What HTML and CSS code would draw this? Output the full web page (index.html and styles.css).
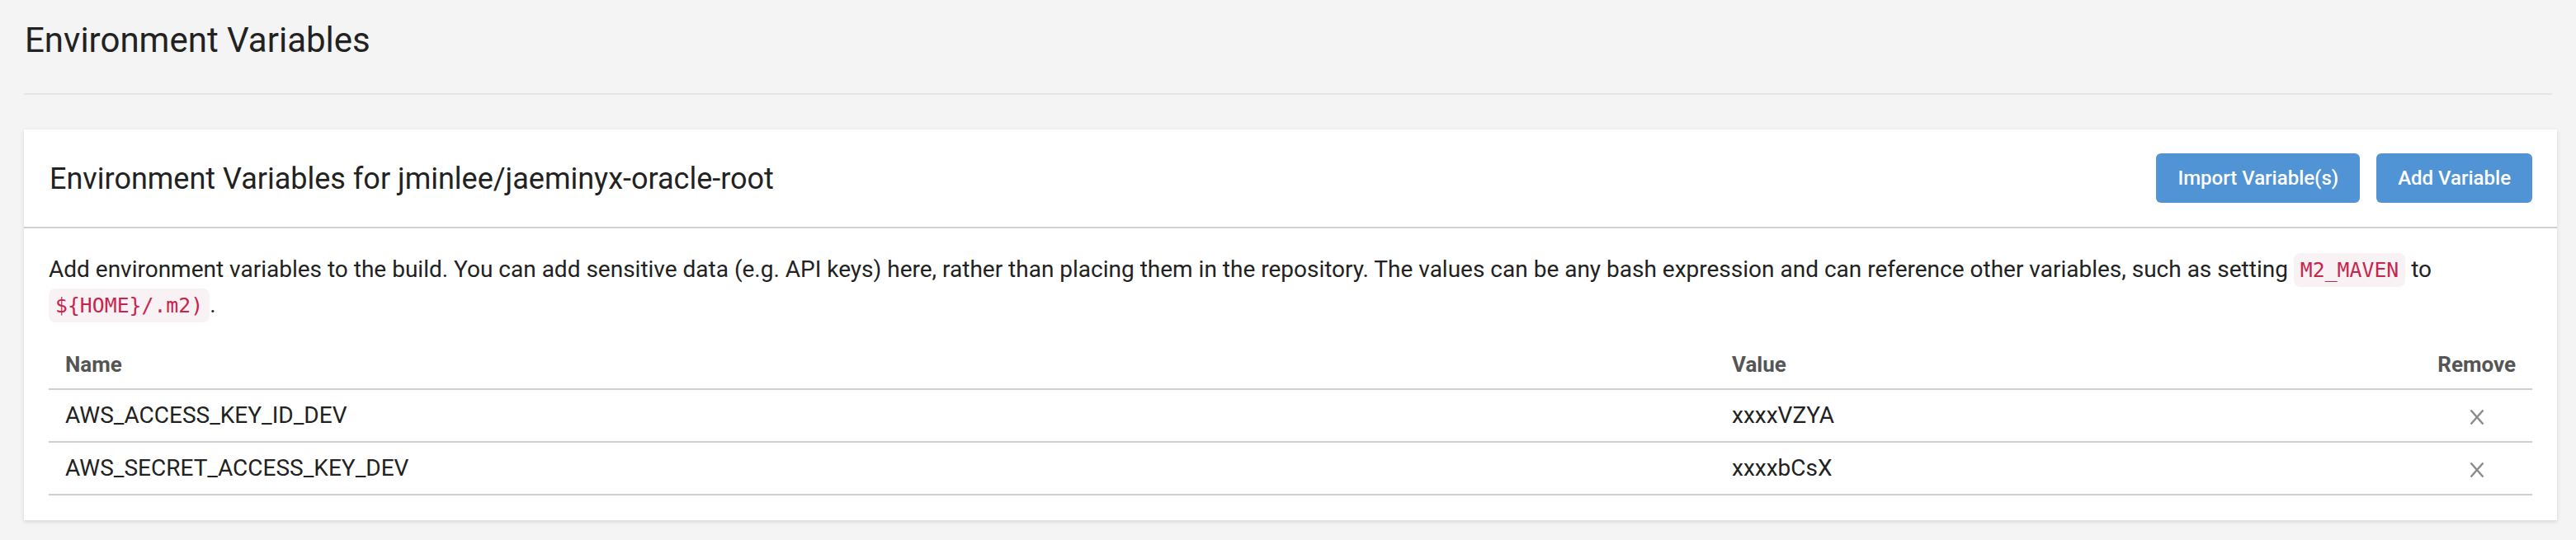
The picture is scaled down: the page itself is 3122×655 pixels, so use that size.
FILE: index.html
```html
<!DOCTYPE html>
<html lang="en">
<head>
<meta charset="utf-8">
<title>Environment Variables</title>
<link rel="stylesheet" href="styles.css">
</head>
<body>
<div class="page">
  <header class="page-header">
    <h1 class="page-title">Environment Variables</h1>
  </header>
  <section class="card">
    <div class="card-header">
      <h2 class="card-title">Environment Variables for jminlee/jaeminyx-oracle-root</h2>
      <div class="actions">
        <button class="btn">Import Variable(s)</button>
        <button class="btn">Add Variable</button>
      </div>
    </div>
    <div class="card-body">
      <p class="intro">Add environment variables to the build. You can add sensitive data (e.g. API keys) here, rather than placing them in the repository. The values can be any bash expression and can reference other variables, such as setting <code class="code">M2_MAVEN</code> to <code class="code">${HOME}/.m2)</code>.</p>
      <table class="vars">
        <thead>
          <tr>
            <th class="col-name">Name</th>
            <th class="col-value">Value</th>
            <th class="col-remove">Remove</th>
          </tr>
        </thead>
        <tbody>
          <tr>
            <td>AWS_ACCESS_KEY_ID_DEV</td>
            <td>xxxxVZYA</td>
            <td class="cell-remove"><svg class="x-icon" viewBox="0 0 18 20" width="18" height="20"><path d="M1.5 1.5 L16.5 18.5 M16.5 1.5 L1.5 18.5"/></svg></td>
          </tr>
          <tr>
            <td>AWS_SECRET_ACCESS_KEY_DEV</td>
            <td>xxxxbCsX</td>
            <td class="cell-remove"><svg class="x-icon" viewBox="0 0 18 20" width="18" height="20"><path d="M1.5 1.5 L16.5 18.5 M16.5 1.5 L1.5 18.5"/></svg></td>
          </tr>
        </tbody>
      </table>
    </div>
  </section>
</div>
</body>
</html>
```

FILE: styles.css
```css
html, body {
  margin: 0;
  padding: 0;
  background: #f4f4f4;
}
body {
  font-family: Roboto, "Liberation Sans", sans-serif;
  color: #222;
}
.page {
  padding: 0 23px 24px 29px;
}
.page-header {
  padding: 24px 0 40px 1px;
  border-bottom: 2px solid #e5e5e5;
  margin-right: 6px;
}
.page-title {
  margin: 0;
  font-size: 42px;
  font-weight: 400;
  line-height: 49px;
  color: #222;
}
.card {
  margin-top: 42px;
  background: #fff;
  box-shadow: 0 2px 5px rgba(0, 0, 0, 0.12);
}
.card-header {
  height: 120px;
  box-sizing: border-box;
  padding: 0 30px 0 31px;
  display: flex;
  align-items: center;
  justify-content: space-between;
  border-bottom: 2px solid #d0d0d0;
}
.card-title {
  margin: 0;
  font-size: 36px;
  font-weight: 400;
  color: #222;
  padding-top: 2px;
}
.actions {
  display: flex;
  gap: 20px;
}
.btn {
  height: 60px;
  padding: 0 26px;
  border: 0;
  border-radius: 6px;
  background: #5094d5;
  color: #fff;
  font-family: Roboto, "Liberation Sans", sans-serif;
  font-size: 24px;
  font-weight: 500;
}
.card-body {
  padding: 29px 30px 30px 30px;
}
.intro {
  margin: 0;
  font-size: 28px;
  line-height: 42px;
  color: #222;
}
.code {
  font-family: "DejaVu Sans Mono", "Liberation Mono", monospace;
  font-size: 24.8px;
  color: #c7254e;
  background: #f9f2f4;
  border-radius: 8px;
  padding: 6px 8px;
}
.vars {
  width: 100%;
  margin-top: 19px;
  border-collapse: collapse;
  font-size: 28px;
}
.vars th {
  text-align: left;
  font-size: 26px;
  font-weight: 700;
  color: #555;
  padding: 16px 20px 14px;
  line-height: 30px;
  border-bottom: 2px solid #cfcfcf;
}
.vars td {
  padding: 16px 20px;
  line-height: 30px;
  color: #222;
  border-bottom: 2px solid #cfcfcf;
}
.col-name {
  width: 1980px;
}
.col-remove {
  text-align: right !important;
  width: 94px;
}
.cell-remove {
  text-align: center;
}
.x-icon {
  display: inline-block;
  vertical-align: middle;
  fill: none;
  stroke: #8a8a8a;
  stroke-width: 2.4;
}
```
